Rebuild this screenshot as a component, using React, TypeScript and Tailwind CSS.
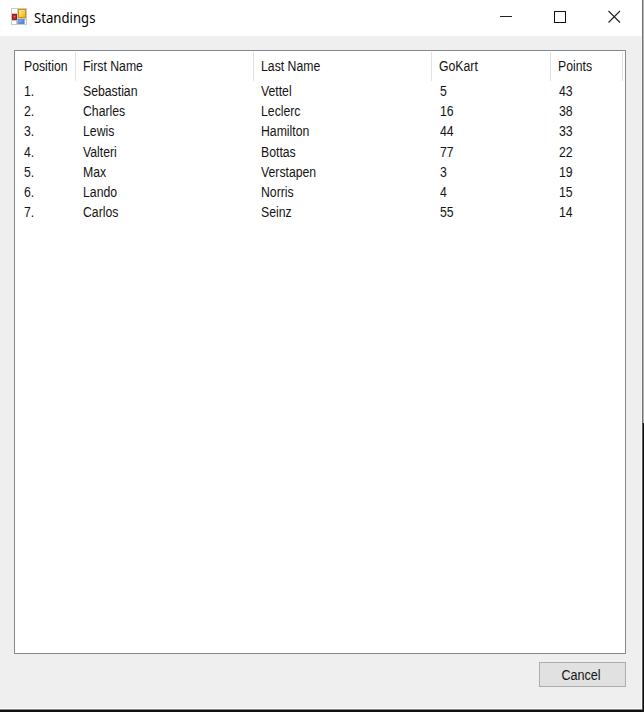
const columns = [
  { label: "Position", width: "w-[61px]", pad: "pl-[9px]", cellPad: "pl-[9px]" },
  { label: "First Name", width: "w-[178px]", pad: "pl-[7px]", cellPad: "pl-[7px]" },
  { label: "Last Name", width: "w-[178px]", pad: "pl-[7px]", cellPad: "pl-[7px]" },
  { label: "GoKart", width: "w-[119px]", pad: "pl-[7px]", cellPad: "pl-[8px]" },
  { label: "Points", width: "w-[72px]", pad: "pl-[7px]", cellPad: "pl-[8px]" },
];

const rows = [
  ["1.", "Sebastian", "Vettel", "5", "43"],
  ["2.", "Charles", "Leclerc", "16", "38"],
  ["3.", "Lewis", "Hamilton", "44", "33"],
  ["4.", "Valteri", "Bottas", "77", "22"],
  ["5.", "Max", "Verstapen", "3", "19"],
  ["6.", "Lando", "Norris", "4", "15"],
  ["7.", "Carlos", "Seinz", "55", "14"],
];

function Label({ children }: { children: string }) {
  return <span className="inline-block origin-left scale-x-[0.875] whitespace-nowrap">{children}</span>;
}

function FormIcon() {
  return (
    <svg width="17" height="17" viewBox="0 0 17 17" className="shrink-0">
      <defs>
        <linearGradient id="gold" x1="0" y1="0" x2="1" y2="1">
          <stop offset="0" stopColor="#fff0a0" />
          <stop offset="1" stopColor="#f0b000" />
        </linearGradient>
        <linearGradient id="blue" x1="0" y1="0" x2="1" y2="1">
          <stop offset="0" stopColor="#8abaf8" />
          <stop offset="1" stopColor="#3d78d4" />
        </linearGradient>
      </defs>
      <rect width="16" height="17" fill="#c9c9c9" />
      <rect x="1" y="1" width="5" height="4" fill="#fff" />
      <rect x="1" y="13" width="4" height="3" fill="#fff" />
      <rect x="14" y="12" width="1" height="4" fill="#fff" />
      <rect x="1" y="6" width="5" height="6" fill="#c42d20" />
      <rect x="1.5" y="6.5" width="4" height="5" fill="none" stroke="#9d1c12" />
      <rect x="3" y="8" width="1" height="1" fill="#f09080" />
      <rect x="7.5" y="1.5" width="7" height="8" fill="url(#gold)" stroke="#c8940f" />
      <rect x="7" y="11.3" width="6" height="4.4" fill="url(#blue)" stroke="#4b7fcb" strokeWidth="0.6" />
    </svg>
  );
}

export default function App() {
  return (
    <div className="flex h-[712px] w-[644px] flex-col overflow-hidden bg-[#111] font-['Liberation_Sans',Arial,sans-serif] text-[14px] text-[#141414]">
      <div className="flex h-[710px]">
        <div className="flex w-[642px] flex-col border-b border-[#858585] bg-[#efefef]">
          <header className="flex h-9 shrink-0 items-start bg-white pt-2 pl-[11px]">
            <FormIcon />
            <h1 className="ml-[6px] w-[455px] font-['Noto_Sans','Open_Sans',sans-serif] text-[14px] leading-[19px] text-black">
              <span className="inline-block origin-left scale-x-[0.94] whitespace-nowrap">Standings</span>
            </h1>
            <div className="flex gap-[41px] pl-[11px] pt-[2px]">
              <svg width="13" height="13" viewBox="0 0 13 13" shapeRendering="crispEdges"><path d="M0 6.5h12" stroke="#222" /></svg>
              <svg width="13" height="13" viewBox="0 0 13 13" shapeRendering="crispEdges"><path d="M.5 1.5h11v11H.5z" fill="none" stroke="#111" /></svg>
              <svg width="13" height="13" viewBox="0 0 13 13"><path d="M.5 1l11.5 11.5M12 1L.5 12.5" stroke="#222" strokeWidth="1.1" /></svg>
            </div>
          </header>
          <main className="flex grow flex-col border-r border-b border-[#f9f9f9] pl-[14px] pt-[14px]">
            <div className="h-[604px] w-[612px] shrink-0 border border-[#828790] bg-white">
              <div className="flex h-[30.5px] pt-[1px]">
                {columns.map((c) => (
                  <div key={c.label} className={`${c.width} ${c.pad} flex h-[29px] shrink-0 items-center border-r border-[#e2e2e2]`}>
                    <Label>{c.label}</Label>
                  </div>
                ))}
              </div>
              {rows.map((row) => (
                <div key={row[0]} className="flex h-[20.2px] items-center">
                  {row.map((cell, i) => (
                    <div key={i} className={`${columns[i].width} ${columns[i].cellPad} shrink-0`}>
                      <Label>{cell}</Label>
                    </div>
                  ))}
                </div>
              ))}
            </div>
            <button className="mt-2 ml-[525px] flex h-[25px] w-[87px] items-center justify-center border border-[#adadad] bg-[#e1e1e1]">
              <span className="inline-block scale-x-[0.9] pt-px pr-1">Cancel</span>
            </button>
          </main>
        </div>
        <div className="flex w-[2px] flex-col">
          <div className="flex h-[423px]">
            <div className="w-px bg-[#707070]" />
            <div className="w-px bg-[#b5b5b5]" />
          </div>
          <div className="w-px grow bg-[#555]" />
        </div>
      </div>
    </div>
  );
}
